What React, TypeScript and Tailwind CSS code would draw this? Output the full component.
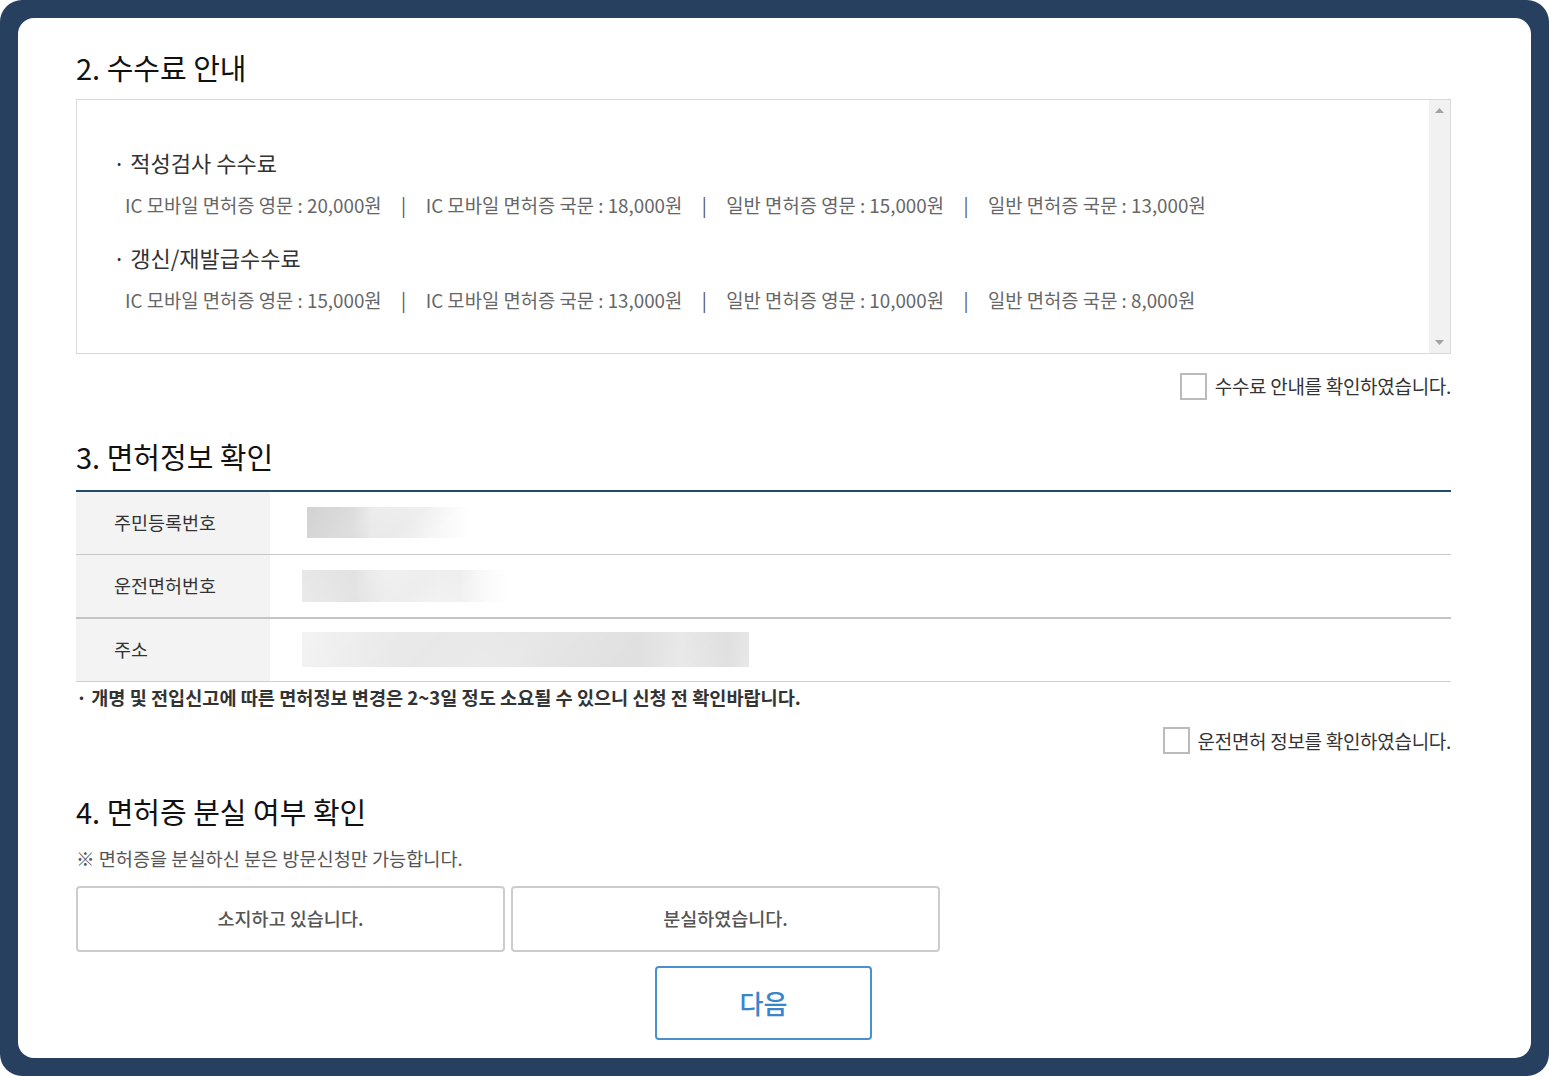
import React from "react";

const font = { fontFamily: '"Noto Sans CJK KR", "Noto Sans", sans-serif' };

function FeeLine({ items }: { items: string[] }) {
  return (
    <div className="mt-[12px] flex items-center pl-[12px] text-[18.8px] text-[#666]">
      {items.map((t, i) => (
        <React.Fragment key={t}>
          {i > 0 && <span className="px-[19.5px] text-[#555]">|</span>}
          <span>{t}</span>
        </React.Fragment>
      ))}
    </div>
  );
}

function Check({ label }: { label: string }) {
  return (
    <label className="flex items-center justify-end gap-[8px] text-[19px] text-[#333]">
      <span className="h-[27px] w-[27px] border-2 border-[#bbb] bg-white" />
      <span className="tracking-[-0.3px]">{label}</span>
    </label>
  );
}

// masked personal data: mosaic-like diagonal blur
const blurs = [
  "ml-[37px] h-[31px] w-[164px] bg-[linear-gradient(135deg,rgba(0,0,0,0.03)_0%,rgba(0,0,0,0)_35%,rgba(0,0,0,0.02)_60%,rgba(0,0,0,0)_80%),linear-gradient(90deg,#d9d9d9_0%,#dedede_28%,#ececec_40%,#f1f1f1_62%,#f7f7f7_80%,#ffffff_100%)]",
  "ml-[32px] h-[32px] w-[209px] bg-[linear-gradient(135deg,rgba(0,0,0,0.02)_0%,rgba(0,0,0,0)_30%,rgba(0,0,0,0.02)_55%,rgba(0,0,0,0)_75%),linear-gradient(90deg,#ececec_0%,#e3e3e3_25%,#f1f1f1_40%,#f3f3f3_65%,#f0f0f0_75%,#fafafa_88%,#ffffff_100%)]",
  "ml-[32px] h-[35px] w-[447px] bg-[linear-gradient(135deg,rgba(0,0,0,0)_0%,rgba(0,0,0,0.015)_30%,rgba(0,0,0,0)_50%,rgba(0,0,0,0.02)_75%,rgba(0,0,0,0)_100%),linear-gradient(90deg,#f3f3f3_0%,#ececec_20%,#ebebeb_40%,#e6e6e6_55%,#e4e4e4_75%,#ececec_85%,#e1e1e1_95%,#e8e8e8_100%)]",
];

export default function App() {
  return (
    <div className="min-h-screen w-full bg-white" style={font}>
      <div className="h-[1076px] w-[1549px] rounded-[22px] bg-[#27405f] p-[18px]">
        <div className="h-full w-full rounded-[16px] bg-white pl-[58px] pr-[80px] pt-[30px]">
          <h2 className="text-[29px] leading-[38px] text-[#111]">2. 수수료 안내</h2>

          <div className="mt-[13px] flex h-[255px] border border-[#d9d9d9]">
            <div className="flex-1 pt-[46px] pl-[36px]">
              <div className="text-[22px] text-[#333]">· 적성검사 수수료</div>
              <FeeLine
                items={[
                  "IC 모바일 면허증 영문 : 20,000원",
                  "IC 모바일 면허증 국문 : 18,000원",
                  "일반 면허증 영문 : 15,000원",
                  "일반 면허증 국문 : 13,000원",
                ]}
              />
              <div className="mt-[22px] text-[22px] text-[#333]">· 갱신/재발급수수료</div>
              <FeeLine
                items={[
                  "IC 모바일 면허증 영문 : 15,000원",
                  "IC 모바일 면허증 국문 : 13,000원",
                  "일반 면허증 영문 : 10,000원",
                  "일반 면허증 국문 : 8,000원",
                ]}
              />
            </div>
            <div className="flex w-[21px] flex-col items-center justify-between bg-[#f1f1f1] py-[8px]">
              <svg width="9" height="5" viewBox="0 0 9 5"><path d="M0 5 L4.5 0 L9 5Z" fill="#a3a3a3" /></svg>
              <svg width="9" height="5" viewBox="0 0 9 5"><path d="M0 0 L4.5 5 L9 0Z" fill="#a3a3a3" /></svg>
            </div>
          </div>

          <div className="mt-[18px]">
            <Check label="수수료 안내를 확인하였습니다." />
          </div>

          <h2 className="mt-[36px] text-[29px] leading-[38px] text-[#111]">3. 면허정보 확인</h2>

          <div className="mt-[15px] border-t-2 border-[#1f4c6e]">
            {[
              { k: "주민등록번호", b: blurs[0], row: "h-[63px] border-b border-[#c8c8c8]" },
              { k: "운전면허번호", b: blurs[1], row: "h-[64px] border-b-2 border-[#c4c4c4]" },
              { k: "주소", b: blurs[2], row: "h-[63px] border-b border-[#cfcfcf]" },
            ].map((r) => (
              <div key={r.k} className={`flex ${r.row}`}>
                <div className="flex w-[194px] items-center bg-[#f3f3f3] pl-[38px] text-[18.5px] text-[#333]">{r.k}</div>
                <div className="flex flex-1 items-center">
                  <div className={r.b} />
                </div>
              </div>
            ))}
          </div>

          <p className="mt-[3px] text-[18.6px] font-bold leading-[24px] text-[#333]">
            · 개명 및 전입신고에 따른 면허정보 변경은 2~3일 정도 소요될 수 있으니 신청 전 확인바랍니다.
          </p>

          <div className="mt-[18px]">
            <Check label="운전면허 정보를 확인하였습니다." />
          </div>

          <h2 className="mt-[37px] text-[29px] leading-[38px] text-[#111]">4. 면허증 분실 여부 확인</h2>
          <p className="mt-[14px] text-[18.6px] text-[#555]">※ 면허증을 분실하신 분은 방문신청만 가능합니다.</p>

          <div className="mt-[14px] flex gap-[6px]">
            <button className="h-[66px] w-[429px] rounded-[4px] border-2 border-[#cccccc] bg-white text-[18.5px] font-medium text-[#555]">
              소지하고 있습니다.
            </button>
            <button className="h-[66px] w-[429px] rounded-[4px] border-2 border-[#cccccc] bg-white text-[18.5px] font-medium text-[#555]">
              분실하였습니다.
            </button>
          </div>

          <div className="mt-[14px] flex pl-[579px]">
            <button className="h-[74px] w-[217px] rounded-[4px] border-2 border-[#4a8fcf] bg-white text-[26px] font-medium text-[#3a85c9]">
              다음
            </button>
          </div>
        </div>
      </div>
    </div>
  );
}
